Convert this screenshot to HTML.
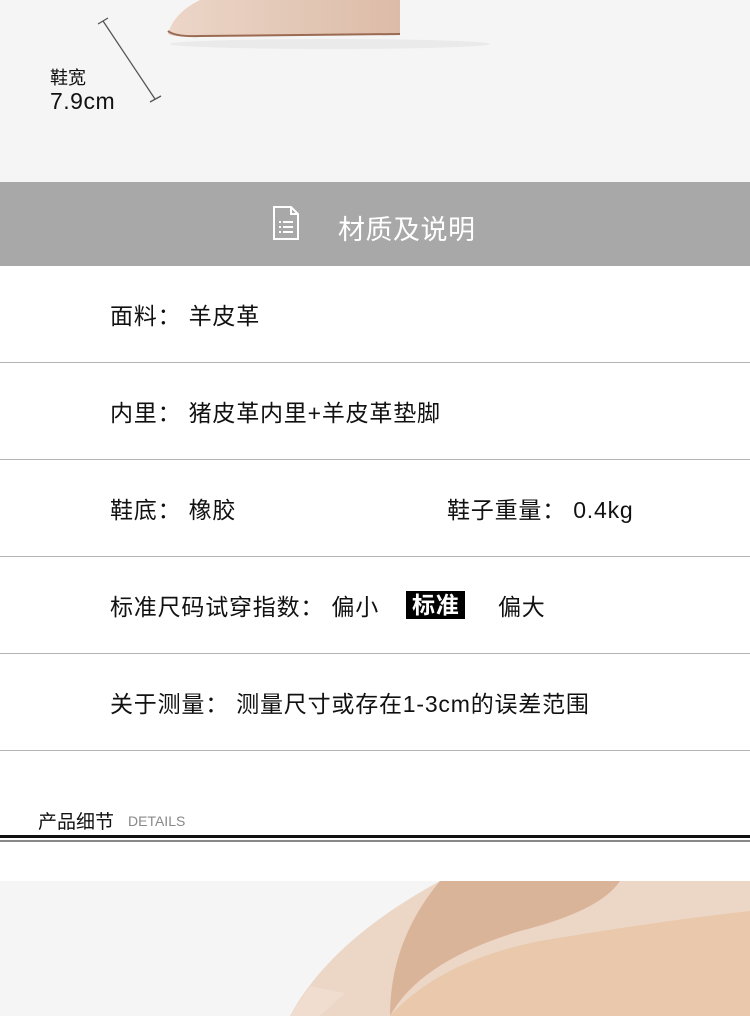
<!DOCTYPE html>
<html><head><meta charset="utf-8"><style>
*{margin:0;padding:0;box-sizing:border-box}
body{width:750px;height:1016px;overflow:hidden;background:#fff;font-family:"Liberation Sans","Noto Sans CJK SC",sans-serif;position:relative}
.a{position:absolute}
.row{position:absolute;left:0;width:750px;height:97px;border-bottom:1px solid #b5b5b5;font-size:23px;color:#111;letter-spacing:0.8px}
.row span{position:absolute;top:50%;transform:translateY(-50%);white-space:nowrap}
</style></head><body>
<div class="a" style="left:0;top:0;width:750px;height:182px;background:#f5f5f5"></div>
<svg class="a" style="left:0;top:0" width="750" height="182">
<defs><linearGradient id="g" x1="0" y1="0" x2="1" y2="0"><stop offset="0" stop-color="#ecd6c8"/><stop offset="1" stop-color="#dcbca8"/></linearGradient></defs>
<ellipse cx="330" cy="44" rx="160" ry="5" fill="#e2e2e2" opacity=".6"/>
<path d="M168 33 Q175 12 200 0 L400 0 L400 34 L180 36 Q168 36 168 33Z" fill="url(#g)"/>
<path d="M168 31 Q175 37 200 36 L400 34" stroke="#9b6a52" stroke-width="2" fill="none"/>
<path d="M98 24 L108 18 M103 21 L155 99 M150 102 L161 96" stroke="#555" stroke-width="1.3"/>
</svg>
<div class="a" style="left:50px;top:64px;font-size:18px;color:#111">鞋宽</div>
<div class="a" style="left:50px;top:88px;font-size:23px;color:#111;letter-spacing:0.5px">7.9cm</div>
<div class="a" style="left:0;top:182px;width:750px;height:84px;background:#a8a8a8"></div>
<svg class="a" style="left:272px;top:206px" width="28" height="34" fill="none" stroke="#fff" stroke-width="2"><path d="M2 1 H19 L26 8 V33 H2Z M19 1 V8 H26"/><path d="M7 16h2M11 16h10M7 21h2M11 21h10M7 26h2M11 26h10"/></svg>
<div class="a" style="left:338px;top:208px;font-size:27px;color:#fff;letter-spacing:0.5px">材质及说明</div>
<div class="row" style="top:266px"><span style="left:110px">面料：&nbsp;羊皮革</span></div>
<div class="row" style="top:363px"><span style="left:110px">内里：&nbsp;猪皮革内里+羊皮革垫脚</span></div>
<div class="row" style="top:460px"><span style="left:110px">鞋底：&nbsp;橡胶</span><span style="left:447px">鞋子重量：&nbsp;0.4kg</span></div>
<div class="row" style="top:557px"><span style="left:110px">标准尺码试穿指数：&nbsp;偏小</span><span style="left:406px;background:#000;color:#fff;padding:0 5px 0 6px;font-weight:bold;line-height:28px">标准</span><span style="left:498px">偏大</span></div>
<div class="row" style="top:654px"><span style="left:110px">关于测量：&nbsp;测量尺寸或存在1-3cm的误差范围</span></div>
<div class="a" style="left:38px;top:807px;font-size:19px;color:#111">产品细节</div>
<div class="a" style="left:128px;top:813px;font-size:14px;color:#888">DETAILS</div>
<div class="a" style="left:0;top:835px;width:750px;height:3px;background:#111"></div>
<div class="a" style="left:0;top:840px;width:750px;height:2px;background:#888"></div>
<div class="a" style="left:0;top:881px;width:750px;height:135px;background:#f5f5f5"></div>
<svg class="a" style="left:0;top:881px" width="750" height="135">
<path d="M290 135 Q330 60 440 0 L750 0 L750 135Z" fill="#ecd6c6"/>
<path d="M390 135 Q390 60 440 0 L620 0 Q600 30 520 50 Q420 80 390 135Z" fill="#d9b498"/>
<path d="M390 135 Q440 80 540 60 Q660 40 750 30 L750 135Z" fill="#e9c8ac"/>
<path d="M290 135 L310 105 L345 112 L320 135Z" fill="#f0ddd0"/>
</svg>
</body></html>
